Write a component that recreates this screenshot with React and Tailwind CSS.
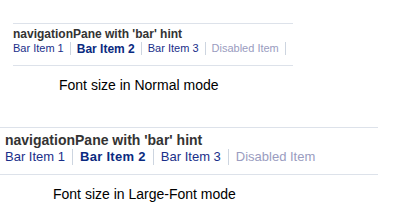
import React from 'react';

const items = [
  { label: 'Bar Item 1' },
  { label: 'Bar Item 2', selected: true },
  { label: 'Bar Item 3' },
  { label: 'Disabled Item', disabled: true },
];

const NavPane = ({ large }) => {
  const sep = large ? 'mx-[7px] h-[16px]' : 'mx-[6px] h-[13px]';
  return (
    <div
      className={
        large
          ? 'w-[378px] border-t border-b border-[#dde2ea] pl-[5px] pt-[4px] pb-[8px]'
          : 'w-[280px] border-t border-b border-[#dde2ea] pt-[3px] pb-[9px]'
      }
      style={{ fontFamily: '"Liberation Sans", Arial, sans-serif' }}
    >
      <div
        className={
          large
            ? 'whitespace-nowrap text-[14px] leading-[16px] font-bold text-[#333333]'
            : 'whitespace-nowrap text-[12px] leading-[14px] font-bold text-[#333333]'
        }
      >
        navigationPane with 'bar' hint
      </div>
      <div
        className={
          large
            ? 'flex items-center whitespace-nowrap h-[18px] text-[13px]'
            : 'flex items-center whitespace-nowrap h-[15px] text-[11px]'
        }
      >
        {items.map((it, i) => (
          <React.Fragment key={it.label}>
            <span
              className={
                it.disabled
                  ? 'text-[#9a9cc0]'
                  : it.selected
                  ? large
                    ? 'font-bold tracking-[0.3px] text-[#0a2a80]'
                    : 'font-bold text-[12px] text-[#0a2a80]'
                  : 'text-[#1a2f8a]'
              }
            >
              {it.label}
            </span>
            {(i < items.length - 1 || !large) && <span className={`w-px shrink-0 bg-[#cdd5e0] ${sep}`} />}
          </React.Fragment>
        ))}
      </div>
    </div>
  );
};

export default function App() {
  return (
    <div className="w-[397px] h-[206px] bg-white" style={{ fontFamily: '"Liberation Sans", Arial, sans-serif' }}>
      <div className="pt-[23px] pl-[13px]">
        <NavPane />
      </div>
      <div className="pl-[59px] pt-[11px] text-[14px] leading-[16px] text-black">Font size in Normal mode</div>
      <div className="pt-[34px]">
        <NavPane large />
      </div>
      <div className="pl-[53px] pt-[11px] text-[14px] leading-[16px] text-black">Font size in Large-Font mode</div>
    </div>
  );
}
